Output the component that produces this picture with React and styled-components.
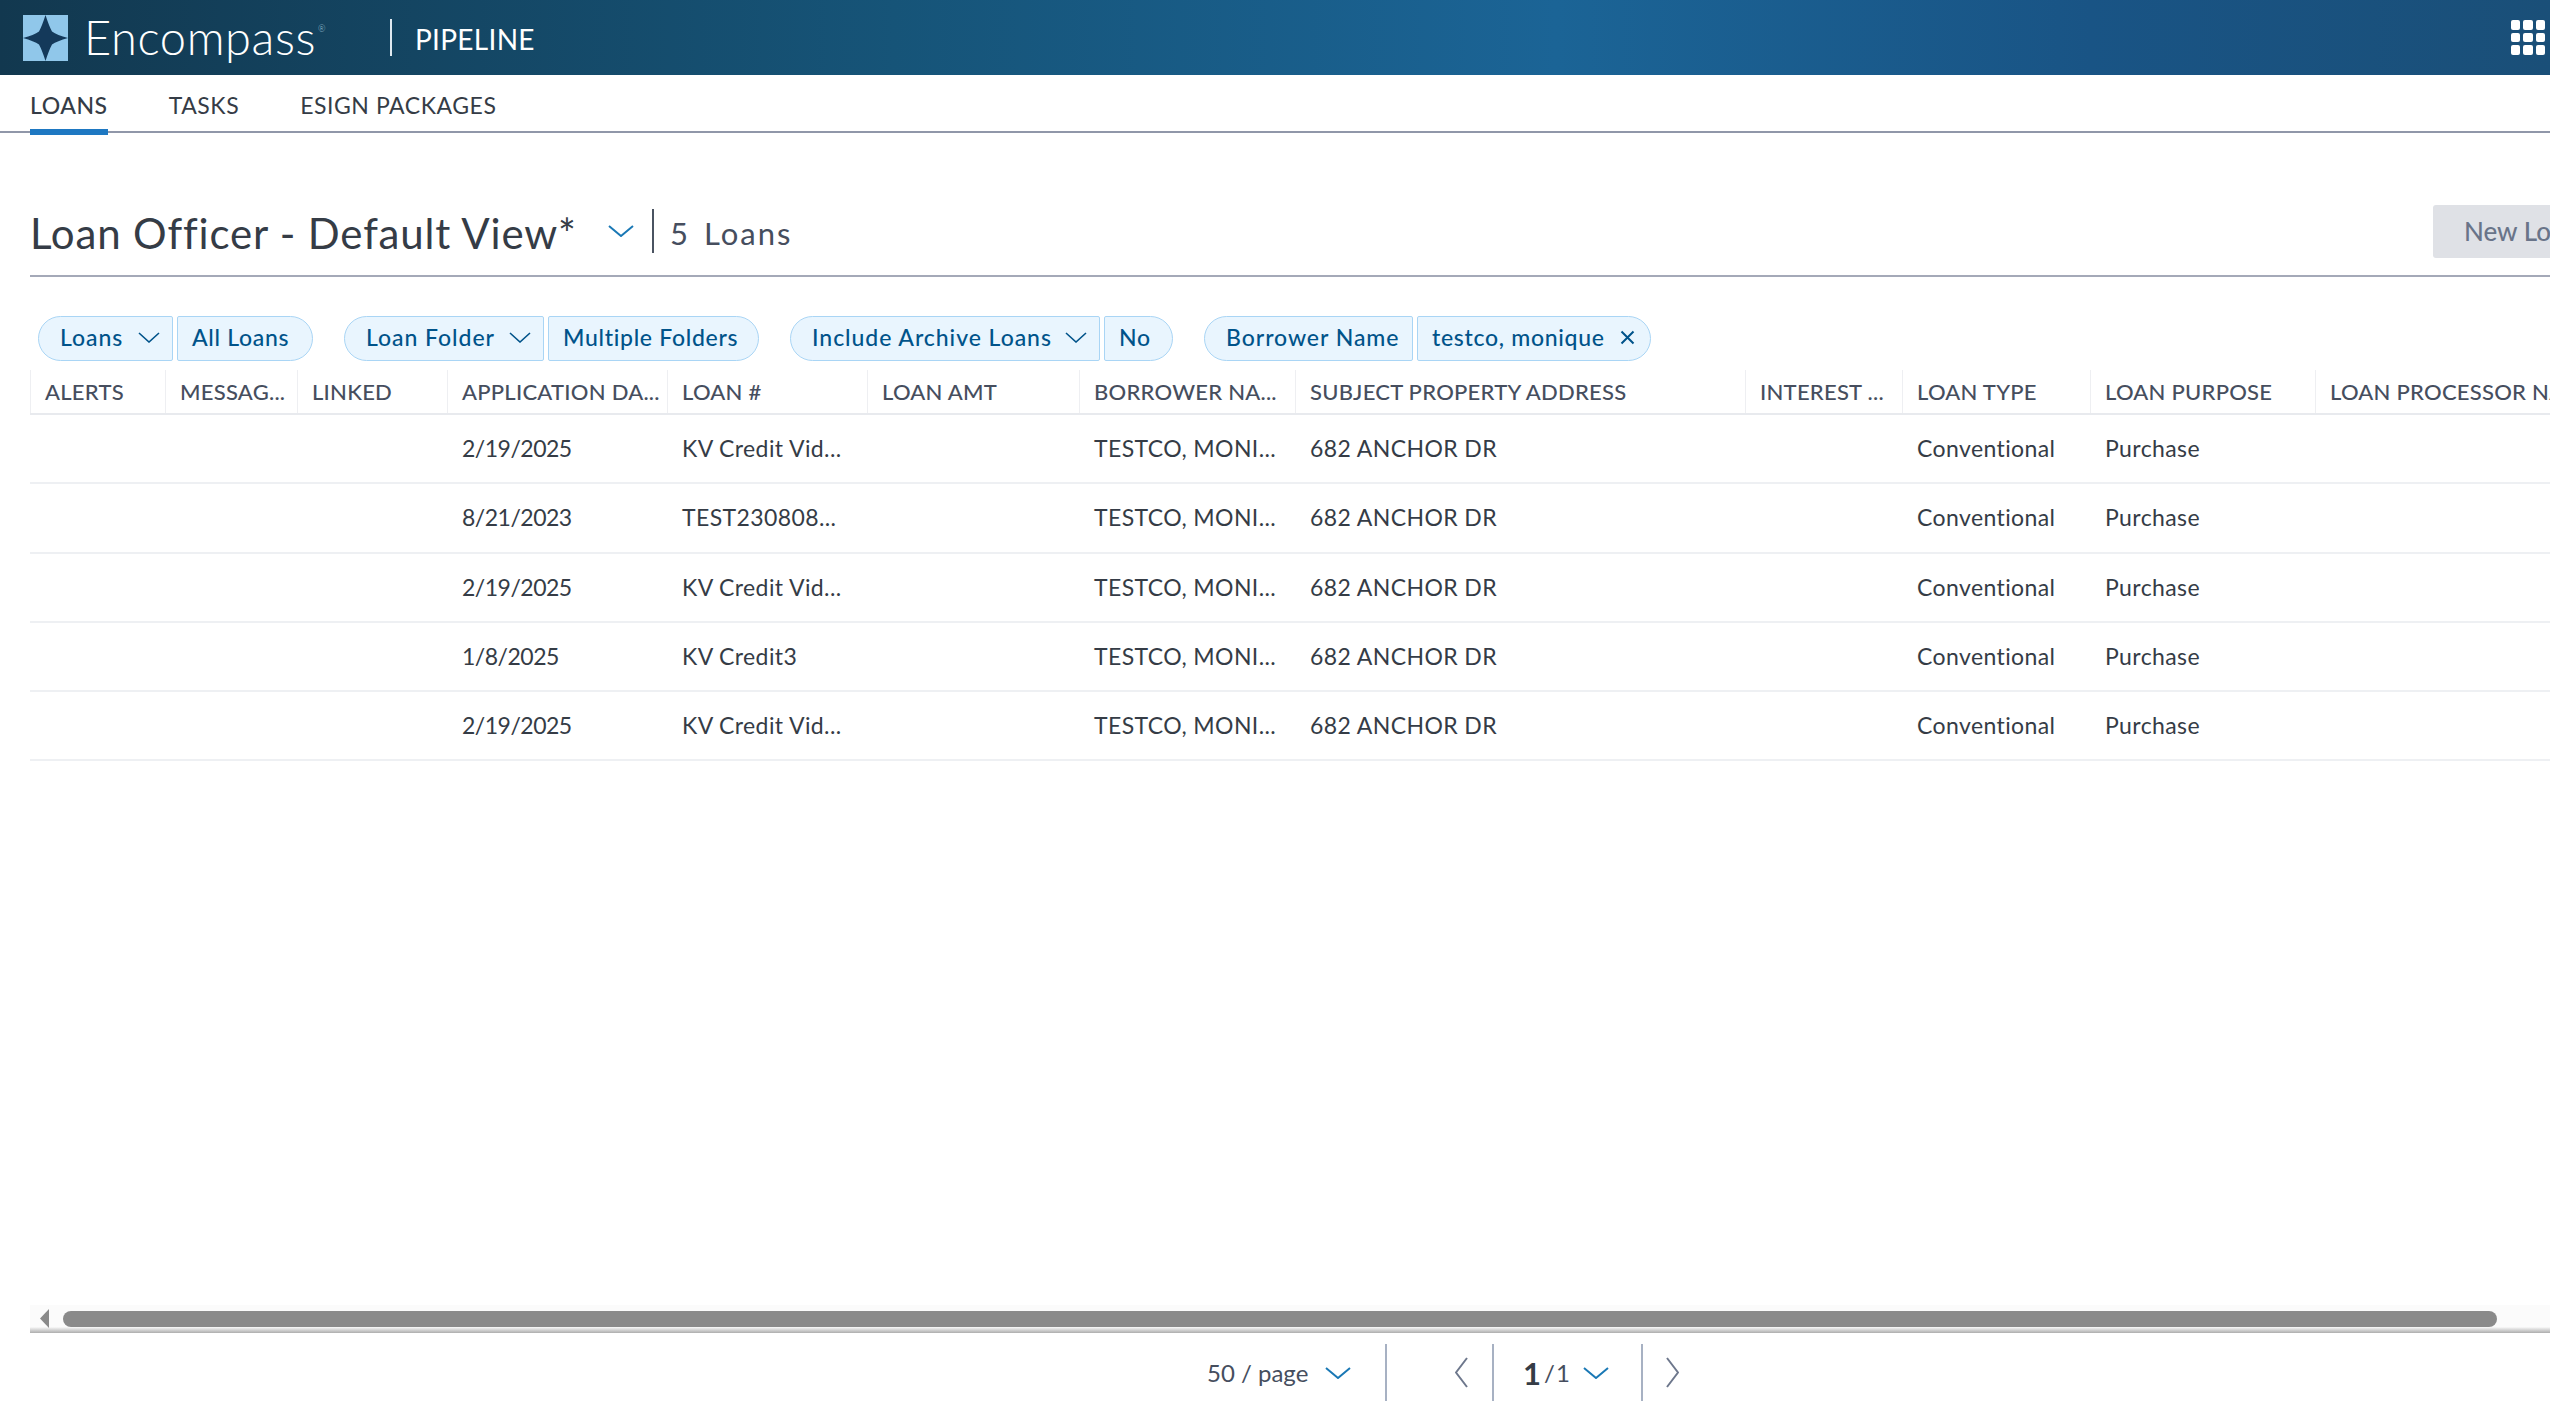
import React from "react"
import styled, { createGlobalStyle } from "styled-components"

const COLS = "135px 132px 150px 220px 200px 212px 216px 450px 157px 188px 225px 400px"

const headers = [
    "ALERTS", "MESSAG...", "LINKED", "APPLICATION DA...", "LOAN #", "LOAN AMT", "BORROWER NA...",
    "SUBJECT PROPERTY ADDRESS", "INTEREST ...", "LOAN TYPE", "LOAN PURPOSE", "LOAN PROCESSOR NAME",
]

const loans = [
    { date: "2/19/2025", num: "KV Credit Vid..." },
    { date: "8/21/2023", num: "TEST230808..." },
    { date: "2/19/2025", num: "KV Credit Vid..." },
    { date: "1/8/2025", num: "KV Credit3" },
    { date: "2/19/2025", num: "KV Credit Vid..." },
]

const GlobalStyle = createGlobalStyle`
    html, body {
        margin: 0;
        padding: 0;
        background: #fff;
        overflow: hidden;
    }
    body {
        font-family: Lato, "Open Sans", sans-serif;
        color: #353c46;
    }
    * {
        box-sizing: border-box;
    }
`

const Page = styled.div`
    width: 2550px;
    height: 1401px;
    display: flex;
    flex-direction: column;
    overflow: hidden;
`

const TopBar = styled.header`
    height: 75px;
    flex: none;
    display: flex;
    align-items: center;
    padding: 0 5px 0 23px;
    background: linear-gradient(90deg, #12384f 0%, #165478 35%, #1b6496 61%, #195485 82%, #1a4f78 100%);
    color: #fff;
`

const Wordmark = styled.div`
    margin-left: 16px;
    width: 306px;
    font-size: 47px;
    font-weight: 300;
    line-height: 75px;
    letter-spacing: 0.6px;
    display: flex;

    sup {
        font-size: 9px;
        line-height: 1;
        margin: 24px 0 0 2px;
        letter-spacing: 0;
        color: #9fc2d8;
    }
`

const BarDivider = styled.div`
    width: 1.5px;
    height: 37px;
    margin-right: 23.5px;
    background: #dfe9f0;
`

const AppName = styled.div`
    font-size: 28px;
    letter-spacing: 0.3px;
    flex: 1;
    padding-top: 2px;
`

const AppGrid = styled.div`
    display: grid;
    grid-template-columns: repeat(3, 9.5px);
    grid-auto-rows: 9.5px;
    gap: 3px;

    span {
        background: #fff;
        border-radius: 2px;
    }
`

const TabBar = styled.nav`
    height: 58px;
    flex: none;
    display: flex;
    gap: 61px;
    padding-left: 30px;
    border-bottom: 2px solid #9097a9;
`

const Tab = styled.div`
    height: 60px;
    flex: none;
    display: flex;
    align-items: center;
    font-size: 23px;
    letter-spacing: 0.55px;
    font-weight: ${(p) => (p.$active ? 500 : 400)};
    border-bottom: 6px solid ${(p) => (p.$active ? "#1e78c2" : "transparent")};
    padding-top: 6px;
    color: #353c46;
`

const TitleRow = styled.div`
    flex: none;
    height: 144px;
    margin-left: 30px;
    padding: 72px 0 18px;
    display: flex;
    align-items: center;
    border-bottom: 2px solid #a4a9b8;
`

const Title = styled.h1`
    margin: 0;
    font-size: 42px;
    font-weight: 400;
    letter-spacing: 0.84px;
    width: 578px;
    padding-top: 3px;
    color: #353c46;
    white-space: nowrap;
`

const TitleSeparator = styled.div`
    width: 2px;
    height: 44px;
    margin: 0 16px 0 18px;
    background: #4a5361;
`

const Count = styled.div`
    font-size: 31px;
    letter-spacing: 2px;
    padding-top: 3px;
    color: #464e5e;
    display: flex;
    gap: 14px;
`

const NewButton = styled.button`
    flex: none;
    margin-left: auto;
    margin-right: -63px;
    width: 180px;
    height: 53px;
    padding: 0 0 0 31px;
    border: none;
    border-radius: 3px;
    background: #dfe1e6;
    color: #697489;
    font-family: inherit;
    font-size: 26px;
    font-weight: 500;
    text-align: left;
    white-space: nowrap;
`

const Filters = styled.div`
    flex: none;
    display: flex;
    gap: 31px;
    margin: 39px 0 9px 38px;
`

const FilterGroup = styled.div`
    display: flex;
    gap: 4px;
`

const Chip = styled.div`
    height: 45px;
    width: ${(p) => p.$w}px;
    display: flex;
    align-items: center;
    justify-content: space-between;
    padding: ${(p) => (p.$first ? "0 12px 3px 21px" : "0 15px 3px 14px")};
    background: #e9f5fe;
    border: 1.5px solid #a9d5f5;
    border-radius: ${(p) => (p.$first ? "23px 2px 2px 23px" : "2px 23px 23px 2px")};
    color: #00538a;
    font-size: 23px;
    font-weight: 500;
    letter-spacing: ${(p) => (p.$first ? 0.95 : 0.7)}px;
    white-space: nowrap;
`

const Table = styled.div`
    flex: 1;
    margin-left: 30px;
    overflow: hidden;
`

const HeadRow = styled.div`
    display: grid;
    grid-template-columns: ${COLS};
    height: 45px;
    border-bottom: 2px solid #e8eaee;
`

const HeadCell = styled.div`
    display: flex;
    align-items: center;
    padding: 0 0 1px 14px;
    border-left: 1.5px solid #eeeff2;
    font-size: 22px;
    font-weight: 500;
    letter-spacing: 0.25px;
    color: #464e5e;
    white-space: nowrap;
    overflow: hidden;
`

const BodyRow = styled.div`
    display: grid;
    grid-template-columns: ${COLS};
    height: 69.25px;
    border-bottom: 2px solid #eef0f3;
`

const BodyCell = styled.div`
    display: flex;
    align-items: center;
    padding: 0 0 1px 15px;
    font-size: 23px;
    letter-spacing: 0.4px;
    color: #353c46;
    white-space: nowrap;
`

const DateCell = styled(BodyCell)`
    letter-spacing: -0.5px;
`

const ScrollBar = styled.div`
    flex: none;
    height: 28px;
    margin-left: 30px;
    display: flex;
    padding: 6px 53px 6px 10px;
    background: linear-gradient(180deg, #fbfbfb 0, #fbfbfb 22px, #ececec 23px, #adadad 28px);
`

const ScrollArrow = styled.svg`
    flex: none;
    margin-top: -2px;
`

const ScrollThumb = styled.div`
    flex: 1;
    height: 16px;
    margin-left: 14px;
    border-radius: 8px;
    background: #8a8a8a;
`

const Footer = styled.footer`
    flex: none;
    height: 68px;
    display: flex;
    align-items: flex-end;
    padding-left: 1207px;
`

const PageSize = styled.div`
    height: 57px;
    width: 178px;
    display: flex;
    align-items: center;
    gap: 17px;
    font-size: 24px;
    color: #464e5e;
`

const FootSeparator = styled.div`
    width: 2px;
    height: 57px;
    background: #a7b1c3;
`

const PagerButton = styled.div`
    height: 57px;
    width: ${(p) => p.$w}px;
    display: flex;
    align-items: center;
    justify-content: ${(p) => p.$align || "center"};
    padding-right: ${(p) => p.$pad || 0}px;
`

const PageCurrent = styled.div`
    height: 57px;
    width: 147px;
    display: flex;
    align-items: center;
    padding-left: 29px;
    font-size: 24px;
    word-spacing: -5px;
    color: #464e5e;

    b {
        font-size: 31px;
        font-weight: 700;
        color: #353c46;
        margin-right: 4px;
        letter-spacing: -1px;
    }

    svg {
        margin-left: 13px;
    }
`

function Chevron({ w = 26, h = 12, color = "#1a78b5", sw = 2 }) {
    return (
        <svg width={w} height={h} viewBox={`0 0 ${w} ${h}`} fill="none">
            <path d={`M1 1L${w / 2} ${h - 1}L${w - 1} 1`} stroke={color} strokeWidth={sw} />
        </svg>
    )
}

function Side({ flip }) {
    return (
        <svg width="13" height="31" viewBox="0 0 13 31" fill="none">
            <path d={flip ? "M1 1L12 15.5L1 30" : "M12 1L1 15.5L12 30"} stroke="#6d778c" strokeWidth="2" />
        </svg>
    )
}

function Logo() {
    return (
        <svg width="45" height="46" viewBox="0 0 45 46" style={{ flex: "none" }}>
            <rect width="45" height="46" fill="#90c7ea" />
            <path
                d="M22.5 0Q26 11 29 16.5Q34 20 45 23Q34 26 29 29.5Q26 35 22.5 46Q19 35 16 29.5Q11 26 0 23Q11 20 16 16.5Q19 11 22.5 0Z"
                fill="#14395a"
            />
        </svg>
    )
}

function App() {
    const chipChevron = <Chevron w={22} h={11} color="#00538a" sw={1.6} />
    return (
        <Page>
            <GlobalStyle />
            <TopBar>
                <Logo />
                <Wordmark>Encompass<sup>®</sup></Wordmark>
                <BarDivider />
                <AppName>PIPELINE</AppName>
                <AppGrid>
                    {Array.from({ length: 9 }).map((_, i) => <span key={i} />)}
                </AppGrid>
            </TopBar>
            <TabBar>
                <Tab $active>LOANS</Tab>
                <Tab>TASKS</Tab>
                <Tab>ESIGN PACKAGES</Tab>
            </TabBar>
            <TitleRow>
                <Title>Loan Officer - Default View*</Title>
                <Chevron />
                <TitleSeparator />
                <Count><span>5</span><span>Loans</span></Count>
                <NewButton>New Loan</NewButton>
            </TitleRow>
            <Filters>
                <FilterGroup>
                    <Chip $first $w={135}>Loans {chipChevron}</Chip>
                    <Chip $w={136}>All Loans</Chip>
                </FilterGroup>
                <FilterGroup>
                    <Chip $first $w={200}>Loan Folder {chipChevron}</Chip>
                    <Chip $w={211}>Multiple Folders</Chip>
                </FilterGroup>
                <FilterGroup>
                    <Chip $first $w={310}>Include Archive Loans {chipChevron}</Chip>
                    <Chip $w={69}>No</Chip>
                </FilterGroup>
                <FilterGroup>
                    <Chip $first $w={209}>Borrower Name</Chip>
                    <Chip $w={234}>testco, monique
                        <svg width="15" height="15" viewBox="0 0 15 15" fill="none">
                            <path d="M1.5 1.5L13.5 13.5M13.5 1.5L1.5 13.5" stroke="#00538a" strokeWidth="2" />
                        </svg>
                    </Chip>
                </FilterGroup>
            </Filters>
            <Table>
                <HeadRow>
                    {headers.map((h) => <HeadCell key={h}>{h}</HeadCell>)}
                </HeadRow>
                {loans.map((loan, i) => (
                    <BodyRow key={i}>
                        <BodyCell />
                        <BodyCell />
                        <BodyCell />
                        <DateCell>{loan.date}</DateCell>
                        <BodyCell>{loan.num}</BodyCell>
                        <BodyCell />
                        <BodyCell>TESTCO, MONI...</BodyCell>
                        <BodyCell>682 ANCHOR DR</BodyCell>
                        <BodyCell />
                        <BodyCell>Conventional</BodyCell>
                        <BodyCell>Purchase</BodyCell>
                        <BodyCell />
                    </BodyRow>
                ))}
            </Table>
            <ScrollBar>
                <ScrollArrow width="9" height="19" viewBox="0 0 9 19">
                    <path d="M9 0V19L0 9.5Z" fill="#8a8a8a" />
                </ScrollArrow>
                <ScrollThumb />
            </ScrollBar>
            <Footer>
                <PageSize>50 / page <Chevron /></PageSize>
                <FootSeparator />
                <PagerButton $w={105} $align="flex-end" $pad={24}>
                    <Side />
                </PagerButton>
                <FootSeparator />
                <PageCurrent><b>1</b>/ 1 <Chevron /></PageCurrent>
                <FootSeparator />
                <PagerButton $w={58}>
                    <Side flip />
                </PagerButton>
            </Footer>
        </Page>
    )
}

export default App
